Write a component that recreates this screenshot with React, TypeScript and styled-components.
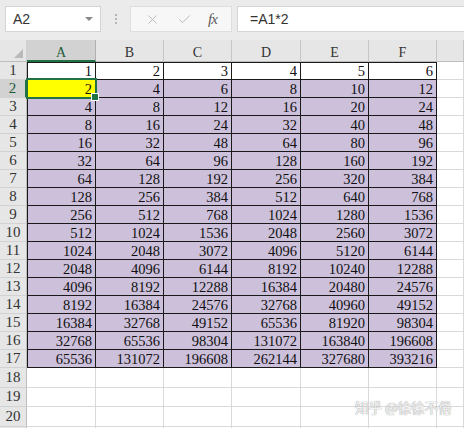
import styled, { createGlobalStyle } from 'styled-components';
import { X, Check } from 'lucide-react';

const GlobalStyle = createGlobalStyle`
  html, body {
    margin: 0;
    padding: 0;
    background: #ffffff;
    overflow: hidden;
  }
  * {
    box-sizing: border-box;
  }
`;

const COLS = ['A', 'B', 'C', 'D', 'E', 'F', ''];
const ROW_COUNT = 21;
const LABELED_ROWS = 20;
const DATA_ROWS = 17;
const DATA_COLS = 6;
const SELECTED_ROW = 2;
const SELECTED_COL = 1;

const Page = styled.div`
  position: relative;
  width: 464px;
  height: 428px;
  overflow: hidden;
  background: #ffffff;
`;

const Toolbar = styled.div`
  display: flex;
  align-items: center;
  height: 40px;
  padding: 2px 0 4px 5px;
  background: #ebebeb;
`;

const NameBox = styled.div`
  display: flex;
  align-items: center;
  justify-content: space-between;
  width: 96px;
  height: 26px;
  padding: 0 7px 0 7px;
  background: #ffffff;
  border: 1px solid #d4d4d4;
  font-family: 'Liberation Sans', 'Noto Sans CJK SC', sans-serif;
  font-size: 14px;
  color: #333333;
`;

const Caret = styled.span`
  width: 0;
  height: 0;
  border-left: 4px solid transparent;
  border-right: 4px solid transparent;
  border-top: 4px solid #8a8a8a;
`;

const Grip = styled.div`
  display: flex;
  flex-direction: column;
  gap: 2px;
  width: 29px;
  align-items: center;
  span {
    width: 2px;
    height: 2px;
    background: #b5b5b5;
  }
`;

const ActionBox = styled.div`
  display: flex;
  align-items: center;
  justify-content: space-around;
  width: 102px;
  height: 26px;
  padding: 0 6px;
  background: #f7f7f7;
  border: 1px solid #dedede;
  color: #b8b8b8;
`;

const Fx = styled.span`
  font-family: 'Liberation Serif', serif;
  font-style: italic;
  font-size: 15px;
  color: #5a5a5a;
  letter-spacing: -1px;
`;

const FormulaInput = styled.div`
  flex: 1;
  display: flex;
  align-items: center;
  height: 26px;
  margin-left: 5px;
  padding-left: 12px;
  background: #ffffff;
  border: 1px solid #d4d4d4;
  border-right: none;
  font-family: 'Liberation Sans', 'Noto Sans CJK SC', sans-serif;
  font-size: 14px;
  color: #333333;
`;

const Sheet = styled.div`
  display: grid;
  grid-template-columns: 27px 69px 68px 68px 69px 68px 68px 1fr;
  grid-template-rows: 22px repeat(${DATA_ROWS}, 18px) repeat(${ROW_COUNT - DATA_ROWS}, 19.5px);
  font-family: 'Liberation Serif', 'DejaVu Serif', serif;
`;

const Corner = styled.div`
  position: relative;
  background: #e6e6e6;
  border-right: 1px solid #cfcfcf;
  border-bottom: 1px solid #bdbdbd;
  &::after {
    content: '';
    position: absolute;
    right: 3px;
    bottom: 3px;
    width: 0;
    height: 0;
    border-left: 9px solid transparent;
    border-bottom: 9px solid #b9b9b9;
  }
`;

const ColHeader = styled.div<{ $active?: boolean }>`
  display: flex;
  align-items: center;
  justify-content: center;
  background: ${({ $active }) => ($active ? '#d2d2d2' : '#e6e6e6')};
  border-right: 1px solid ${({ $active }) => ($active ? '#b0b0b0' : '#c6c6c6')};
  border-bottom: ${({ $active }) =>
    $active ? '2px solid #217346' : '1px solid #bdbdbd'};
  font-size: 14px;
  color: ${({ $active }) => ($active ? '#1d5a38' : '#333333')};
  padding-top: 5px;
`;

const RowHeader = styled.div<{ $active?: boolean }>`
  display: flex;
  align-items: center;
  justify-content: center;
  background: ${({ $active }) => ($active ? '#d2d2d2' : '#e6e6e6')};
  border-right: ${({ $active }) =>
    $active ? '2px solid #217346' : '1px solid #bdbdbd'};
  border-bottom: 1px solid #d2d2d2;
  font-size: 15px;
  color: ${({ $active }) => ($active ? '#1d5a38' : '#333333')};
`;

const Cell = styled.div<{
  $fill: string;
  $boxed: boolean;
  $left: boolean;
  $top: boolean;
}>`
  position: relative;
  display: flex;
  align-items: center;
  justify-content: flex-end;
  padding-right: 3px;
  padding-top: 1px;
  background: ${({ $fill }) => $fill};
  border-right: 1px solid ${({ $boxed }) => ($boxed ? '#1a1a1a' : '#d9d9d9')};
  border-bottom: 1px solid ${({ $boxed }) => ($boxed ? '#1a1a1a' : '#d9d9d9')};
  border-left: ${({ $left }) => ($left ? '1px solid #1a1a1a' : 'none')};
  border-top: ${({ $top }) => ($top ? '1px solid #1a1a1a' : 'none')};
  font-size: 14.5px;
  color: #111111;
  white-space: nowrap;
`;

const Selection = styled.div`
  position: absolute;
  top: -2px;
  left: -2px;
  right: -2px;
  bottom: -2px;
  border: 2px solid #217346;
  z-index: 2;
  pointer-events: none;
  &::after {
    content: '';
    position: absolute;
    right: -4px;
    bottom: -4px;
    width: 6px;
    height: 6px;
    background: #217346;
    border: 1px solid #ffffff;
  }
`;

const Watermark = styled.div`
  position: absolute;
  left: 355px;
  top: 397px;
  white-space: nowrap;
  font-family: 'Noto Sans CJK SC', sans-serif;
  font-size: 13.5px;
  color: rgba(255, 255, 255, 0.9);
  text-shadow: 0 0 1px #a0a0a0, 0 0 1px #a0a0a0;
`;

const cellValue = (row: number, col: number) => col * 2 ** (row - 1);

const fillFor = (row: number, col: number) => {
  if (row === SELECTED_ROW && col === SELECTED_COL) return '#ffff00';
  if (row >= 2 && row <= DATA_ROWS && col <= DATA_COLS) return '#ccc0da';
  return '#ffffff';
};

export default function App() {
  const rows = Array.from({ length: ROW_COUNT }, (_, i) => i + 1);

  return (
    <Page>
      <GlobalStyle />
      <Toolbar>
        <NameBox>
          A2
          <Caret />
        </NameBox>
        <Grip>
          <span />
          <span />
          <span />
        </Grip>
        <ActionBox>
          <X size={15} strokeWidth={1.5} />
          <Check size={15} strokeWidth={1.5} />
          <Fx>fx</Fx>
        </ActionBox>
        <FormulaInput>=A1*2</FormulaInput>
      </Toolbar>

      <Sheet>
        <Corner />
        {COLS.map((c, i) => (
          <ColHeader key={`h${i}`} $active={c === 'A'}>
            {c}
          </ColHeader>
        ))}
        {rows.map((r) => [
          <RowHeader key={`r${r}`} $active={r === SELECTED_ROW}>
            {r <= LABELED_ROWS ? r : ''}
          </RowHeader>,
          ...COLS.map((_, i) => {
            const col = i + 1;
            const boxed = r <= DATA_ROWS && col <= DATA_COLS;
            return (
              <Cell
                key={`c${r}-${col}`}
                $fill={fillFor(r, col)}
                $boxed={boxed}
                $left={boxed && col === 1}
                $top={boxed && r === 1}
              >
                {boxed ? cellValue(r, col) : ''}
                {r === SELECTED_ROW && col === SELECTED_COL && <Selection />}
              </Cell>
            );
          }),
        ])}
      </Sheet>

      <Watermark>知乎 @徐徐不倦</Watermark>
    </Page>
  );
}
